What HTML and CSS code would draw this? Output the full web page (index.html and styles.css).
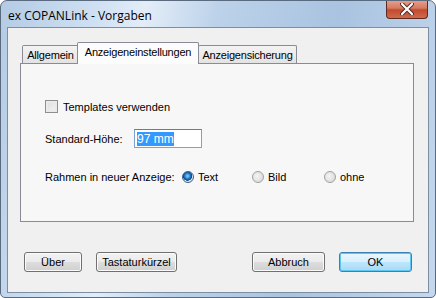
FILE: index.html
```html
<!DOCTYPE html>
<html lang="de">
<head>
    <meta charset="UTF-8">
    <title>ex COPANLink - Vorgaben</title>
    <link rel="stylesheet" href="styles.css">
</head>
<body>
    <div class="window">
        <div class="titlebar">
            <span class="title">ex COPANLink - Vorgaben</span>
            <div class="close">
                <svg width="14" height="12" viewBox="0 0 14 12">
                    <path d="M2 1 L12 11 M12 1 L2 11" stroke="#4c2a24" stroke-width="4" stroke-linecap="round"/>
                    <path d="M2 1 L12 11 M12 1 L2 11" stroke="#fff" stroke-width="2.2" stroke-linecap="round"/>
                </svg>
            </div>
        </div>
        <div class="client">
            <div class="tabs">
                <div class="tab t1">Allgemein</div>
                <div class="tab active">Anzeigeneinstellungen</div>
                <div class="tab t3">Anzeigensicherung</div>
            </div>
            <div class="panel">
                <label class="row check-row">
                    <span class="checkbox"></span>
                    Templates verwenden
                </label>
                <div class="row height-row">
                    <span class="label">Standard-Höhe:</span>
                    <div class="input"><span class="sel">97 mm</span></div>
                </div>
                <div class="row frame-row">
                    <span class="label wide">Rahmen in neuer Anzeige:</span>
                    <span class="radio-item r1"><span class="radio checked"></span>Text</span>
                    <span class="radio-item r2"><span class="radio"></span>Bild</span>
                    <span class="radio-item"><span class="radio"></span>ohne</span>
                </div>
            </div>
            <div class="buttons">
                <button class="btn ueber">Über</button>
                <button class="btn keys">Tastaturkürzel</button>
                <span class="spacer"></span>
                <button class="btn cancel">Abbruch</button>
                <button class="btn ok">OK</button>
            </div>
        </div>
    </div>
</body>
</html>
```

FILE: styles.css
```css
body {
    margin: 0;
    padding: 0;
    background: #ffffff;
    font-family: "Liberation Sans", Arial, sans-serif;
    font-size: 11px;
    color: #000;
}
.window {
    width: 436px;
    height: 298px;
    box-sizing: border-box;
    border: 1px solid #5a6b80;
    border-radius: 7px 7px 5px 5px;
    background: linear-gradient(100deg, #b4cbe4 0%, #cfe0f2 20%, #e3edf8 30%, #bcd2ea 45%, #a9c3e0 70%, #c5d8ee 100%);
    display: flex;
    flex-direction: column;
    overflow: hidden;
    padding: 0 6px 4px 6px;
}
.titlebar {
    height: 26px;
    display: flex;
    align-items: flex-start;
    position: relative;
}
.title {
    font-family: "Open Sans", "Liberation Sans", sans-serif;
    font-size: 12px;
    margin: 6px 0 0 1px;
    color: #000;
}
.close {
    position: absolute;
    right: 1px;
    top: -1px;
    width: 42px;
    height: 19px;
    box-sizing: border-box;
    border: 1px solid #5e2a22;
    border-top: none;
    border-radius: 0 0 4px 4px;
    background: linear-gradient(#e8a18f 0%, #d67a62 45%, #c24a2e 55%, #d06a4c 100%);
    display: flex;
    justify-content: center;
    align-items: center;
}
.client {
    flex: 1;
    background: #f0f0f0;
    border: 1px solid #7d8ea3;
    display: flex;
    flex-direction: column;
    padding: 13px 14px 0 12px;
}
.tabs {
    display: flex;
    align-items: flex-end;
    padding-left: 2px;
    height: 22px;
}
.tab {
    height: 18px;
    box-sizing: border-box;
    border: 1px solid #898c95;
    border-bottom: none;
    background: linear-gradient(#f3f3f3, #e3e3e3);
    padding-top: 3px;
    text-align: center;
    letter-spacing: -0.2px;
    margin-right: -1px;
    border-radius: 2px 2px 0 0;
}
.tab.t1 {
    width: 57px;
}
.tab.t3 {
    width: 99px;
}
.tab.active {
    width: 122px;
    height: 22px;
    background: #fcfcfc;
    margin: 0 -1px 0 -1px;
    position: relative;
    z-index: 1;
    top: 1px;
}
.panel {
    height: 159px;
    box-sizing: border-box;
    border: 1px solid #898c95;
    background: #f7f7f7;
    padding: 36px 0 0 24px;
}
.row {
    display: flex;
    align-items: center;
}
.check-row {
    gap: 5px;
    height: 13px;
}
.checkbox {
    width: 13px;
    height: 13px;
    box-sizing: border-box;
    border: 1px solid #8f8f8f;
    background: linear-gradient(135deg, #dcdcdc, #f6f6f6);
    box-shadow: inset 0 0 0 2px #eaeaea;
}
.height-row {
    margin-top: 16px;
    height: 19px;
}
.label {
    width: 89px;
}
.label.wide {
    width: 137px;
}
.input {
    width: 68px;
    height: 19px;
    box-sizing: border-box;
    border: 1px solid #7da2ce;
    border-top-color: #5c7fab;
    background: #fff;
    padding: 2px 0 0 2px;
}
.sel {
    background: #3399ff;
    color: #fff;
    font-size: 12px;
}
.frame-row {
    margin-top: 23px;
}
.radio-item {
    display: flex;
    align-items: center;
    gap: 4px;
    width: 72px;
}
.radio-item.r1 {
    width: 70px;
}
.radio {
    width: 12px;
    height: 12px;
    box-sizing: border-box;
    border-radius: 50%;
    border: 1px solid #a0a0a0;
    background: radial-gradient(circle at 40% 40%, #f4f4f4, #d4d4d4);
}
.radio.checked {
    border-color: #3b5f86;
    background: radial-gradient(circle at 45% 40%, #8ed4ff 0%, #1e7ad0 35%, #10406e 55%, #dfe9f3 60%, #c9d6e4 100%);
}
.buttons {
    display: flex;
    align-items: center;
    margin-top: 30px;
    padding-left: 4px;
}
.btn {
    font-family: "Liberation Sans", Arial, sans-serif;
    font-size: 11px;
    height: 20px;
    box-sizing: border-box;
    border: 1px solid #707070;
    border-radius: 3px;
    background: linear-gradient(#f2f2f2 0%, #ebebeb 48%, #dddddd 52%, #cfcfcf 100%);
    box-shadow: inset 0 0 0 1px #fbfbfb;
    padding: 0;
    color: #000;
}
.ueber {
    width: 58px;
}
.keys {
    width: 81px;
    margin-left: 14px;
}
.spacer {
    flex: 1;
}
.cancel {
    width: 73px;
}
.ok {
    width: 73px;
    margin-left: 14px;
    margin-right: 2px;
    border-color: #3c7fb1;
    background: linear-gradient(#eaf6fd 0%, #d9f0fc 48%, #bee6fd 52%, #a7d9f5 100%);
    box-shadow: inset 0 0 0 1px #5ac8f0;
}
```
